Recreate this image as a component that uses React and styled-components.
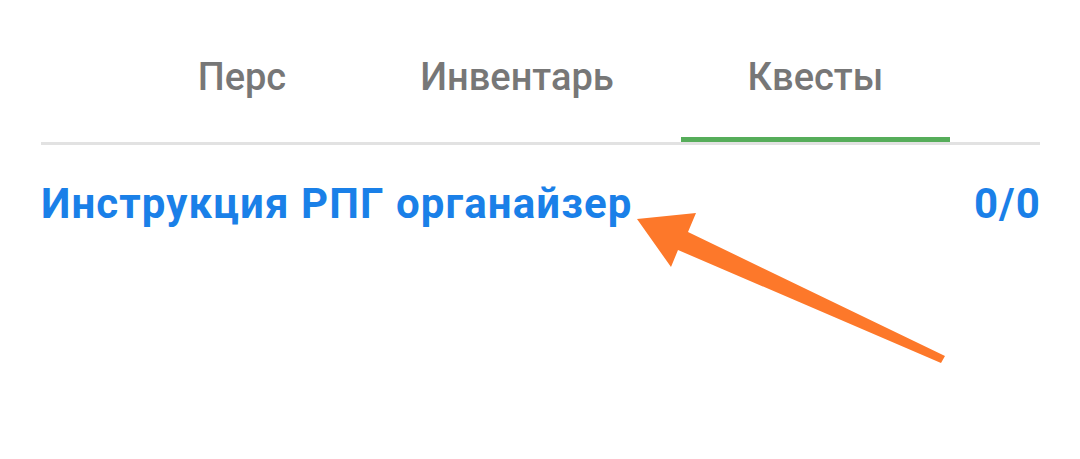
import React from 'react';
import styled, { createGlobalStyle } from 'styled-components';

const Global = createGlobalStyle`
  html, body {
    margin: 0;
    padding: 0;
    background: #fff;
  }
  body {
    font-family: Roboto, 'Noto Sans', Arial, sans-serif;
  }
`;

const tabs = ['Перс', 'Инвентарь', 'Квесты'];

const App = () => {
  const active = 2;

  return (
    <Page>
      <Global />
      <TabBar>
        {tabs.map((t, i) => (
          <Tab key={t} active={i === active}>
            {t}
          </Tab>
        ))}
      </TabBar>
      <QuestRow>
        <QuestTitle>Инструкция РПГ органайзер</QuestTitle>
        <QuestCount>0/0</QuestCount>
      </QuestRow>
      <Arrow width='1080' height='459' viewBox='0 0 1080 459'>
        <polygon
          points='637,219 696,213 688,232 945,356 941,363 678,250 671,267'
          fill='#fd782a'
        />
      </Arrow>
    </Page>
  );
};

const Page = styled.div`
  position: relative;
  width: 1080px;
  height: 459px;
  box-sizing: border-box;
  padding: 12px 40px 0 41px;
  overflow: hidden;
`;

const TabBar = styled.nav`
  display: flex;
  justify-content: center;
  border-bottom: 3px solid #e2e2e2;
`;

const Tab = styled.div`
  position: relative;
  height: 130px;
  display: flex;
  align-items: center;
  padding: 0 67px;
  font-size: 38px;
  font-weight: 500;
  color: #777;

  &::after {
    content: '';
    position: absolute;
    left: 0;
    right: 0;
    bottom: 0;
    height: 5px;
    background: ${(p) => (p.active ? '#56ad5a' : 'transparent')};
  }
`;

const QuestRow = styled.div`
  display: flex;
  justify-content: space-between;
  align-items: center;
  padding-top: 34px;
  color: #1a80e8;
  font-size: 42px;
  font-weight: 700;
  letter-spacing: 1.1px;
  line-height: 50px;
`;

const QuestTitle = styled.span``;

const QuestCount = styled.span`
  margin-right: -1px;
`;

const Arrow = styled.svg`
  position: absolute;
  left: 0;
  top: 0;
  pointer-events: none;
`;

export default App;
